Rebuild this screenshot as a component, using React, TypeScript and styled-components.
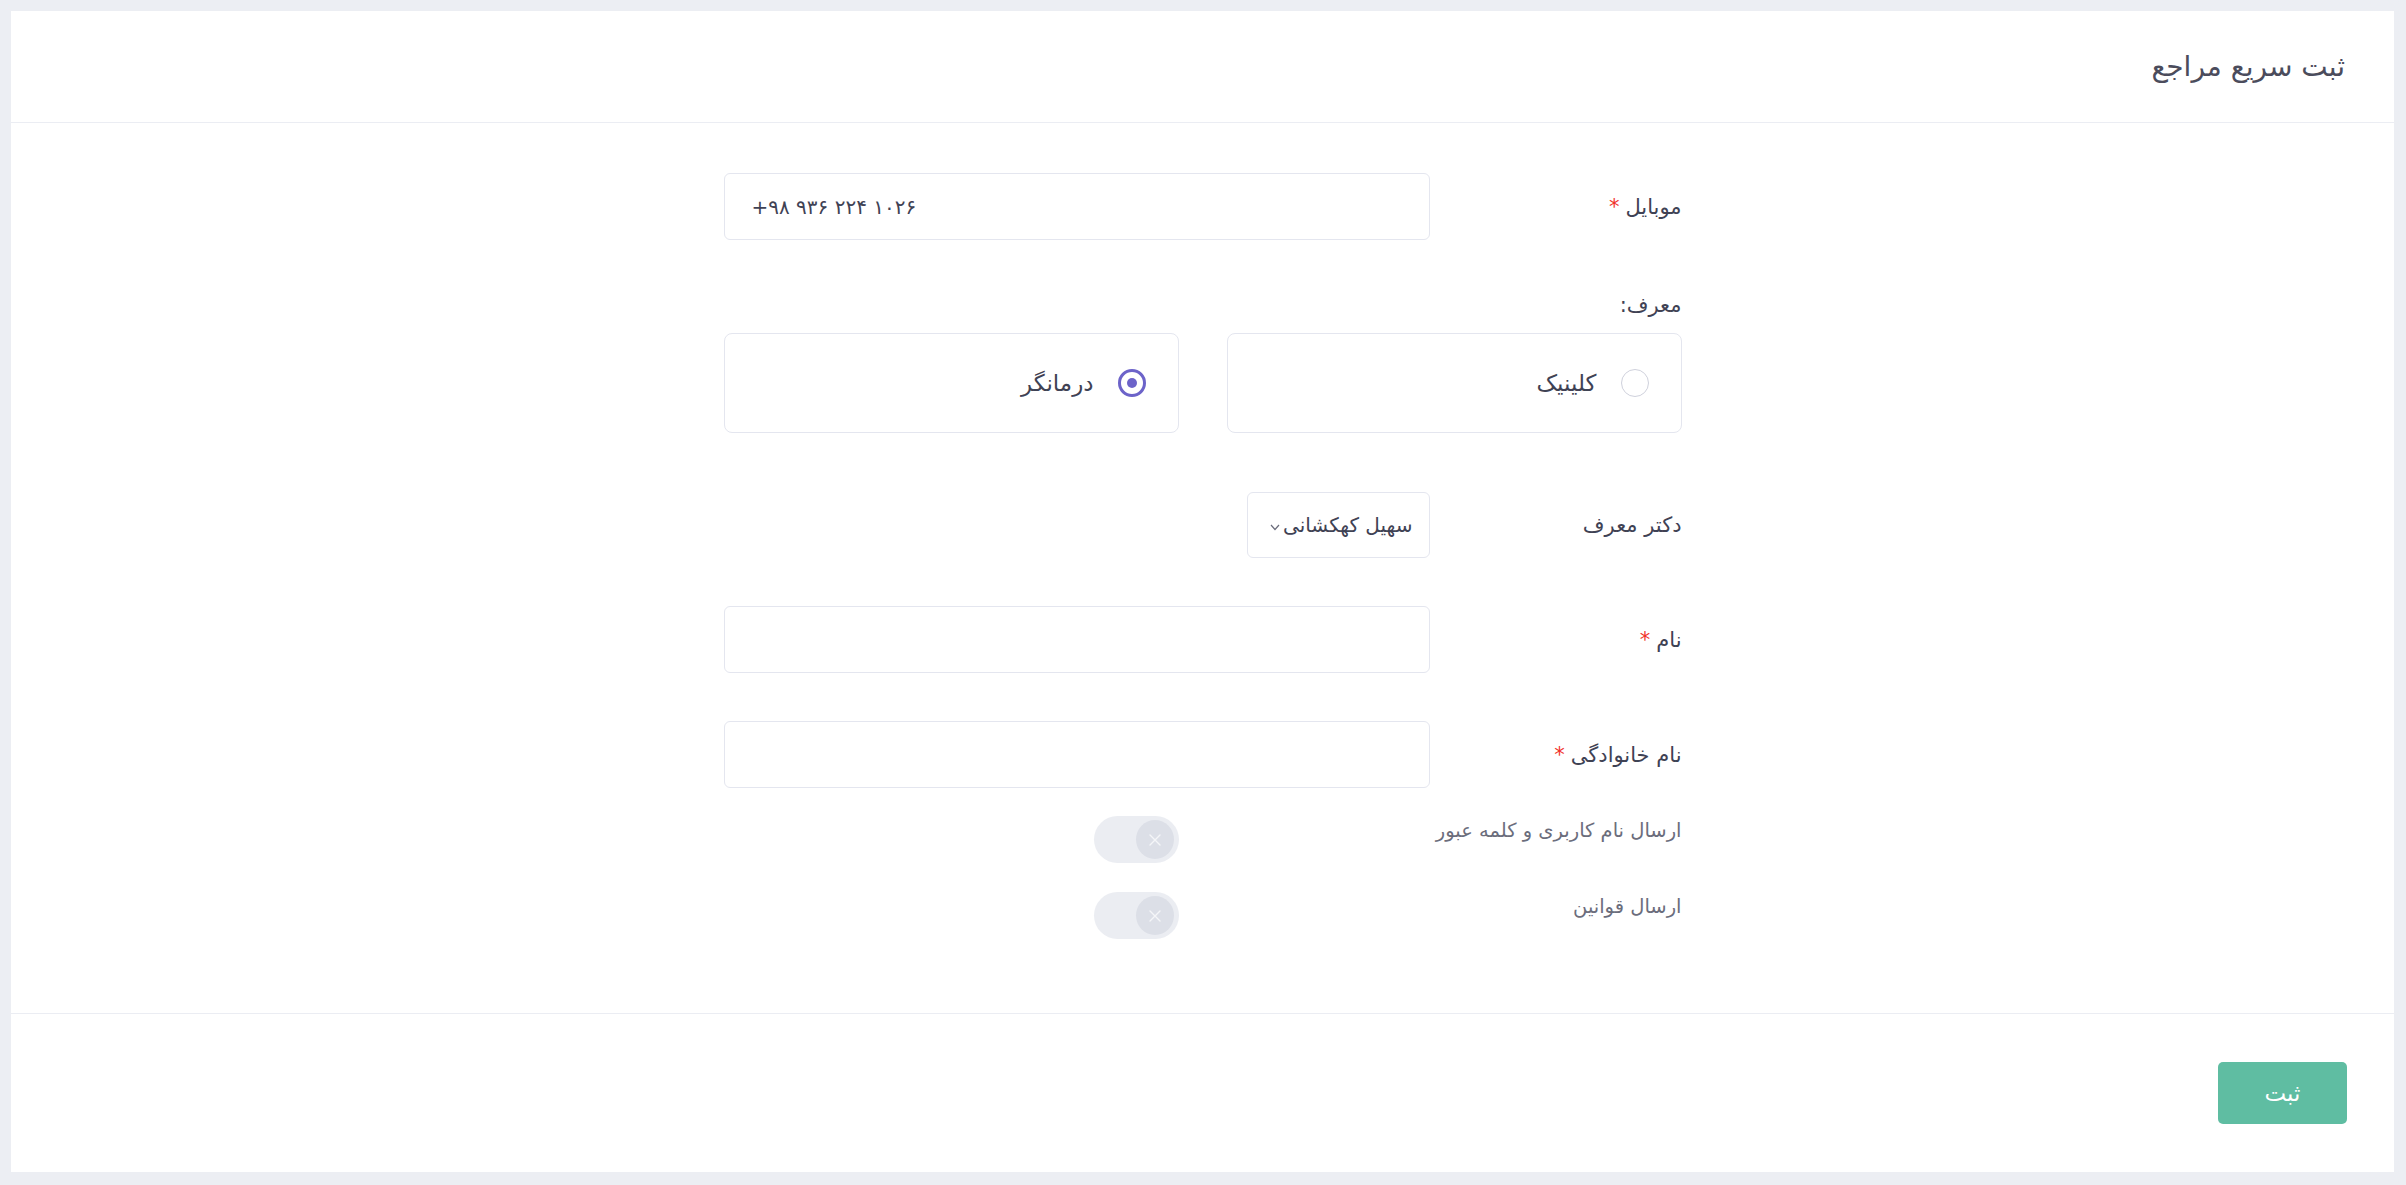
import React from 'react';
import styled, { createGlobalStyle } from 'styled-components';

const GlobalStyle = createGlobalStyle`
  html, body {
    margin: 0;
    padding: 0;
    background: #eceef3;
  }
  * {
    box-sizing: border-box;
  }
  body {
    font-family: 'DejaVu Sans', 'Noto Sans', sans-serif;
    color: #3f4254;
  }
`;

const Page = styled.div`
  min-height: 100vh;
  padding: 11px 12px 12px 11px;
`;

const Card = styled.div`
  background: #fff;
  direction: rtl;
`;

const CardHeader = styled.div`
  height: 112px;
  display: flex;
  align-items: center;
  padding: 0 49px;
  border-bottom: 1px solid #ebedf3;
`;

const Title = styled.h3`
  margin: 0;
  font-size: 28px;
  font-weight: 400;
  color: #4b4c5c;
`;

const CardBody = styled.div`
  padding: 50px 0 74px;
`;

const Form = styled.div`
  width: 958px;
  margin: 0 auto;
  display: flex;
  flex-direction: column;
`;

const FieldRow = styled.div<{ $mb?: number }>`
  display: grid;
  grid-template-columns: 252px 1fr;
  align-items: center;
  margin-bottom: ${(p) => p.$mb ?? 48}px;
`;

const Label = styled.label`
  font-size: 21px;
  color: #3f4254;
  line-height: 34px;
`;

const Star = styled.span`
  color: #f1312a;
  margin-right: 6px;
`;

const TextInput = styled.input`
  height: 67px;
  width: 100%;
  border: 1px solid #e4e6ef;
  border-radius: 6px;
  padding: 0 27px;
  font-family: inherit;
  font-size: 20px;
  color: #3f4254;
  background: #fff;
  outline: none;
  direction: ${(p) => p.dir ?? 'rtl'};
  text-align: ${(p) => (p.dir === 'ltr' ? 'left' : 'right')};
`;

const BlockLabel = styled(Label)`
  display: block;
  margin-bottom: 11px;
`;

const RadioGrid = styled.div`
  display: grid;
  grid-template-columns: 1fr 1fr;
  gap: 48px;
  margin-bottom: 59px;
`;

const RadioCard = styled.label`
  height: 100px;
  border: 1px solid #e4e6ef;
  border-radius: 8px;
  display: flex;
  align-items: center;
  gap: 24px;
  padding: 0 32px;
  cursor: pointer;
`;

const RadioCircle = styled.span<{ $checked?: boolean }>`
  width: 28px;
  height: 28px;
  border-radius: 50%;
  border: ${(p) => (p.$checked ? '3px solid #6c63c9' : '1.5px solid #cfd1dc')};
  display: flex;
  align-items: center;
  justify-content: center;
  flex-shrink: 0;
  &::after {
    content: '';
    display: ${(p) => (p.$checked ? 'block' : 'none')};
    width: 10px;
    height: 10px;
    border-radius: 50%;
    background: #6c63c9;
  }
`;

const RadioText = styled.span`
  font-size: 23px;
  color: #3f4254;
`;

const SelectWrap = styled.div`
  position: relative;
  width: 183px;
  height: 66px;
  border: 1px solid #e4e6ef;
  border-radius: 6px;
  display: flex;
  align-items: center;
  padding: 0 16px 0 20px;
  overflow: hidden;
`;

const SelectValue = styled.span`
  font-size: 20px;
  white-space: nowrap;
  color: #3f4254;
`;

const Chevron = styled.svg`
  position: absolute;
  left: 22px;
  top: 31px;
`;

const ToggleRow = styled.div<{ $mb?: number }>`
  display: grid;
  grid-template-columns: 1fr 1fr;
  gap: 48px;
  align-items: start;
  margin-bottom: ${(p) => p.$mb ?? 0}px;
`;

const ToggleLabel = styled.span`
  font-size: 19.5px;
  color: #6b6d7c;
  line-height: 30px;
`;

const Toggle = styled.span`
  width: 85px;
  height: 47px;
  border-radius: 24px;
  background: #ebedf2;
  display: flex;
  align-items: center;
  padding: 0 5px;
`;

const Knob = styled.span`
  width: 38px;
  height: 39px;
  border-radius: 50%;
  background: #dcdfe7;
  display: flex;
  align-items: center;
  justify-content: center;
`;

const CardFooter = styled.div`
  height: 159px;
  border-top: 1px solid #ebedf3;
  display: flex;
  align-items: center;
  justify-content: flex-start;
  padding: 0 47px;
`;

const SubmitButton = styled.button`
  width: 129px;
  height: 62px;
  border: none;
  border-radius: 5px;
  background: #5fbda2;
  color: #fff;
  font-family: inherit;
  font-size: 23px;
  cursor: pointer;
`;

const XMark = () => (
  <svg width="14" height="14" viewBox="0 0 14 14">
    <path d="M2 2 L12 12 M12 2 L2 12" stroke="#f5f6f8" strokeWidth="1.4" strokeLinecap="round" />
  </svg>
);

const switches = [
  { id: 'cred', label: 'ارسال نام کاربری و کلمه عبور', mb: 29 },
  { id: 'rules', label: 'ارسال قوانین', mb: 0 },
];

const App = () => {
  return (
    <Page>
      <GlobalStyle />
      <Card>
        <CardHeader>
          <Title>ثبت سریع مراجع</Title>
        </CardHeader>
        <CardBody>
          <Form>
            <FieldRow>
              <Label>
                موبایل<Star>*</Star>
              </Label>
              <TextInput dir="ltr" defaultValue="+۹۸ ۹۳۶ ۲۲۴ ۱۰۲۶" />
            </FieldRow>

            <BlockLabel>معرف:</BlockLabel>
            <RadioGrid>
              <RadioCard>
                <RadioCircle />
                <RadioText>کلینیک</RadioText>
              </RadioCard>
              <RadioCard>
                <RadioCircle $checked />
                <RadioText>درمانگر</RadioText>
              </RadioCard>
            </RadioGrid>

            <FieldRow>
              <Label>دکتر معرف</Label>
              <SelectWrap>
                <SelectValue>سهیل کهکشانی</SelectValue>
                <Chevron width="10" height="7" viewBox="0 0 10 7">
                  <path d="M1 1 L5 5.5 L9 1" fill="none" stroke="#6b6d7c" strokeWidth="1.2" />
                </Chevron>
              </SelectWrap>
            </FieldRow>

            <FieldRow>
              <Label>
                نام<Star>*</Star>
              </Label>
              <TextInput />
            </FieldRow>

            <FieldRow $mb={28}>
              <Label>
                نام خانوادگی<Star>*</Star>
              </Label>
              <TextInput />
            </FieldRow>

            {switches.map(({ id, label, mb }) => (
              <ToggleRow key={id} $mb={mb}>
                <ToggleLabel>{label}</ToggleLabel>
                <div>
                  <Toggle>
                    <Knob>
                      <XMark />
                    </Knob>
                  </Toggle>
                </div>
              </ToggleRow>
            ))}
          </Form>
        </CardBody>
        <CardFooter>
          <SubmitButton>ثبت</SubmitButton>
        </CardFooter>
      </Card>
    </Page>
  );
};

export default App;
